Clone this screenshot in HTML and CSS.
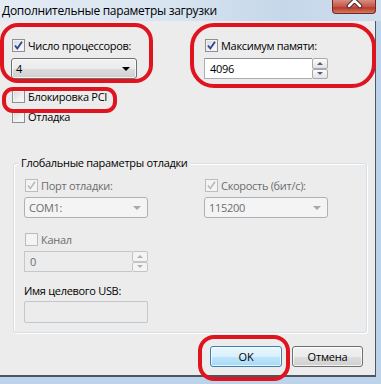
FILE: index.html
```html
<!DOCTYPE html>
<html lang="ru">
<head>
<meta charset="utf-8">
<title>Дополнительные параметры загрузки</title>
<link rel="stylesheet" href="styles.css">
</head>
<body>
<div class="window">
  <div class="titlebar">
    <span class="title">Дополнительные параметры загрузки</span>
    <div class="close">
      <svg width="44" height="14" viewBox="0 0 44 14"><path d="M17 -4 L28 7 M28 -4 L17 7" stroke="#3a1a1a" stroke-width="4.5" stroke-linecap="round"/><path d="M17 -4 L28 7 M28 -4 L17 7" stroke="#fff" stroke-width="2.6" stroke-linecap="round"/></svg>
    </div>
  </div>
  <div class="client">
    <div class="top">
      <div class="col">
        <label class="check"><span class="cb on"><svg width="11" height="11" viewBox="0 0 11 11"><path d="M2 5.5 L4.3 8.5 L9 1.8" fill="none" stroke="#2c4a8f" stroke-width="1.9"/></svg></span>Число процессоров:</label>
        <div class="combo"><span>4</span><i class="arrow"></i></div>
      </div>
      <div class="col">
        <label class="check"><span class="cb on"><svg width="11" height="11" viewBox="0 0 11 11"><path d="M2 5.5 L4.3 8.5 L9 1.8" fill="none" stroke="#2c4a8f" stroke-width="1.9"/></svg></span>Максимум памяти:</label>
        <div class="spin"><div class="edit">4096</div><div class="btns"><span><i class="up"></i></span><span><i class="down"></i></span></div></div>
      </div>
    </div>
    <label class="check pci"><span class="cb"></span>Блокировка PCI</label>
    <label class="check dbg"><span class="cb"></span>Отладка</label>

    <div class="group">
      <div class="legend">Глобальные параметры отладки</div>
      <div class="grid">
        <div class="col">
          <label class="check dis"><span class="cb on"><svg width="11" height="11" viewBox="0 0 11 11"><path d="M2 5.5 L4.3 8.5 L9 1.8" fill="none" stroke="#b9b9b9" stroke-width="1.6"/></svg></span>Порт отладки:</label>
          <div class="combo dis"><span>COM1:</span><i class="arrow"></i></div>
          <label class="check dis kanal"><span class="cb"></span>Канал</label>
          <div class="spin dis"><div class="edit">0</div><div class="btns"><span><i class="up"></i></span><span><i class="down"></i></span></div></div>
          <div class="usb-label">Имя целевого USB:</div>
          <div class="textbox dis"></div>
        </div>
        <div class="col">
          <label class="check dis"><span class="cb on"><svg width="11" height="11" viewBox="0 0 11 11"><path d="M2 5.5 L4.3 8.5 L9 1.8" fill="none" stroke="#b9b9b9" stroke-width="1.6"/></svg></span>Скорость (бит/с):</label>
          <div class="combo dis"><span>115200</span><i class="arrow"></i></div>
        </div>
      </div>
    </div>

    <div class="buttons">
      <button class="btn default">OK</button>
      <button class="btn">Отмена</button>
    </div>
  </div>

  <svg class="marks" width="381" height="384" viewBox="0 0 381 384">
    <g fill="none" stroke="#e0141e" stroke-width="4">
      <rect x="2" y="25" width="149" height="56" rx="16"/>
      <rect x="192" y="25" width="182" height="61" rx="22"/>
      <rect x="4" y="89" width="111" height="22" rx="9"/>
      <rect x="200" y="337" width="88" height="42" rx="14"/>
    </g>
  </svg>
</div>
</body>
</html>
```

FILE: styles.css
```css
html, body {
  margin: 0;
  padding: 0;
}
body {
  width: 381px;
  height: 384px;
  overflow: hidden;
  font-family: "Open Sans", "Noto Sans", sans-serif;
  font-size: 11px;
  letter-spacing: -0.3px;
  color: #000;
}
.window {
  position: relative;
  width: 381px;
  height: 384px;
  background: #bdd3ea;
  display: flex;
  flex-direction: column;
}
.titlebar {
  height: 21px;
  flex: none;
  position: relative;
  background: linear-gradient(90deg, #e4ecf5 0%, #d8e4f0 45%, #c5d7ea 75%, #d0deed 100%);
  display: flex;
  align-items: center;
}
.title {
  font-size: 12px;
  letter-spacing: -0.3px;
  padding-left: 2px;
  margin-top: -1px;
  color: #000;
}
.close {
  position: absolute;
  left: 332px;
  top: 0;
  width: 44px;
  height: 14px;
  box-sizing: border-box;
  border: 1px solid #6e2a24;
  border-top: none;
  border-radius: 0 0 4px 4px;
  background: linear-gradient(#d58e81 0%, #c6574a 50%, #b53a2c 60%, #d77a5e 100%);
}
.close svg { display: block; margin: -1px 0 0 -1px; }
.client {
  width: 376px;
  height: 356px;
  box-sizing: border-box;
  background: #ececec;
  border-right: 1px solid #4d5763;
  border-bottom: 2px solid #4d5763;
  padding: 18px 12px 0 11px;
}
.top {
  display: grid;
  grid-template-columns: 126px 124px;
  column-gap: 67px;
}
.col {
  display: flex;
  flex-direction: column;
}
.check {
  display: flex;
  align-items: center;
  height: 13px;
  margin-left: 1px;
  gap: 3px;
  white-space: nowrap;
}
.cb {
  width: 13px;
  height: 13px;
  box-sizing: border-box;
  border: 1px solid #8f8f8f;
  background: linear-gradient(135deg, #d3d6db 0%, #f4f4f4 70%, #fafafa 100%);
  box-shadow: inset 0 0 0 1px #f2f2f2;
  flex: none;
  display: flex;
  align-items: center;
  justify-content: center;
}
.cb svg { display: block; }
.check.dis { color: #6d6d6d; }
.check.dis .cb {
  border-color: #bcbcbc;
  background: #f4f4f4;
  box-shadow: none;
}
.combo {
  margin-top: 6px;
  height: 21px;
  box-sizing: border-box;
  border: 1px solid #707070;
  border-radius: 3px;
  background: linear-gradient(#f2f2f2 0%, #ebebeb 50%, #dddddd 51%, #cfcfcf 100%);
  box-shadow: inset 0 0 0 1px rgba(255,255,255,0.7);
  display: flex;
  align-items: center;
  justify-content: space-between;
  padding: 0 6px 0 4px;
}
.arrow {
  width: 0;
  height: 0;
  border-left: 4px solid transparent;
  border-right: 4px solid transparent;
  border-top: 4px solid #000;
}
.combo.dis {
  border-color: #adb2b5;
  background: #f4f4f4;
  box-shadow: none;
  color: #6d6d6d;
}
.combo.dis .arrow { border-top-color: #a8a8a8; }
.spin {
  margin-top: 6px;
  height: 21px;
  display: flex;
}
.spin .edit {
  flex: 1;
  box-sizing: border-box;
  background: #fff;
  border: 1px solid #abadb3;
  border-top-color: #8e9095;
  border-right: none;
  padding-left: 5px;
  display: flex;
  align-items: center;
}
.spin .btns {
  width: 16px;
  display: flex;
  flex-direction: column;
}
.spin .btns span {
  flex: 1;
  box-sizing: border-box;
  border: 1px solid #a9a9a9;
  border-radius: 2px;
  background: linear-gradient(#fbfbfb, #e3e3e3);
  display: flex;
  align-items: center;
  justify-content: center;
}
.up, .down {
  width: 0;
  height: 0;
  border-left: 3px solid transparent;
  border-right: 3px solid transparent;
}
.up { border-bottom: 3px solid #4d6185; }
.down { border-top: 3px solid #4d6185; }
.spin.dis .edit {
  background: #ececec;
  border-color: #c4c7cc;
  color: #6d6d6d;
}
.spin.dis .btns span {
  border-color: #c4c4c4;
  background: #f4f4f4;
}
.spin.dis .up { border-bottom-color: #b0b0b0; }
.spin.dis .down { border-top-color: #b0b0b0; }
.pci { margin-top: 11px; }
.dbg { margin-top: 7px; }
.group {
  position: relative;
  margin: 40px 0 0 2px;
  width: 354px;
  height: 170px;
  box-sizing: border-box;
  border: 1px solid #d5dfe5;
  border-radius: 3px;
  box-shadow: inset 1px 1px 0 #fff, 1px 1px 0 #fff;
  padding: 15px 0 0 10px;
}
.legend {
  position: absolute;
  left: 5px;
  top: -9px;
  padding: 0 2px;
  background: #ececec;
  line-height: 16px;
}
.grid {
  display: grid;
  grid-template-columns: 124px 124px;
  column-gap: 56px;
}
.grid .combo { margin-top: 5px; }
.kanal { margin-top: 15px; }
.grid .spin { margin-top: 5px; }
.usb-label {
  margin-top: 10px;
  height: 17px;
  line-height: 17px;
}
.textbox {
  margin-top: 2px;
  height: 22px;
  box-sizing: border-box;
  border: 1px solid #c4c7cc;
  border-radius: 2px;
  background: #ececec;
}
.buttons {
  display: flex;
  justify-content: flex-end;
  gap: 10px;
  margin-top: 13px;
}
.btn {
  font-family: inherit;
  font-size: 11px;
  letter-spacing: -0.2px;
  color: #000;
  width: 71px;
  height: 21px;
  padding: 0;
  box-sizing: border-box;
  border: 1px solid #707070;
  border-radius: 3px;
  background: linear-gradient(#f2f2f2 0%, #ebebeb 50%, #dddddd 51%, #cfcfcf 100%);
  box-shadow: inset 0 0 0 1px rgba(255,255,255,0.75);
}
.btn.default {
  width: 72px;
  border-color: #3c7fb1;
  background: linear-gradient(#eaf6fd 0%, #d9f0fc 50%, #bee6fd 51%, #a7d9f5 100%);
}
.marks {
  position: absolute;
  left: 0;
  top: 0;
  pointer-events: none;
}
```
